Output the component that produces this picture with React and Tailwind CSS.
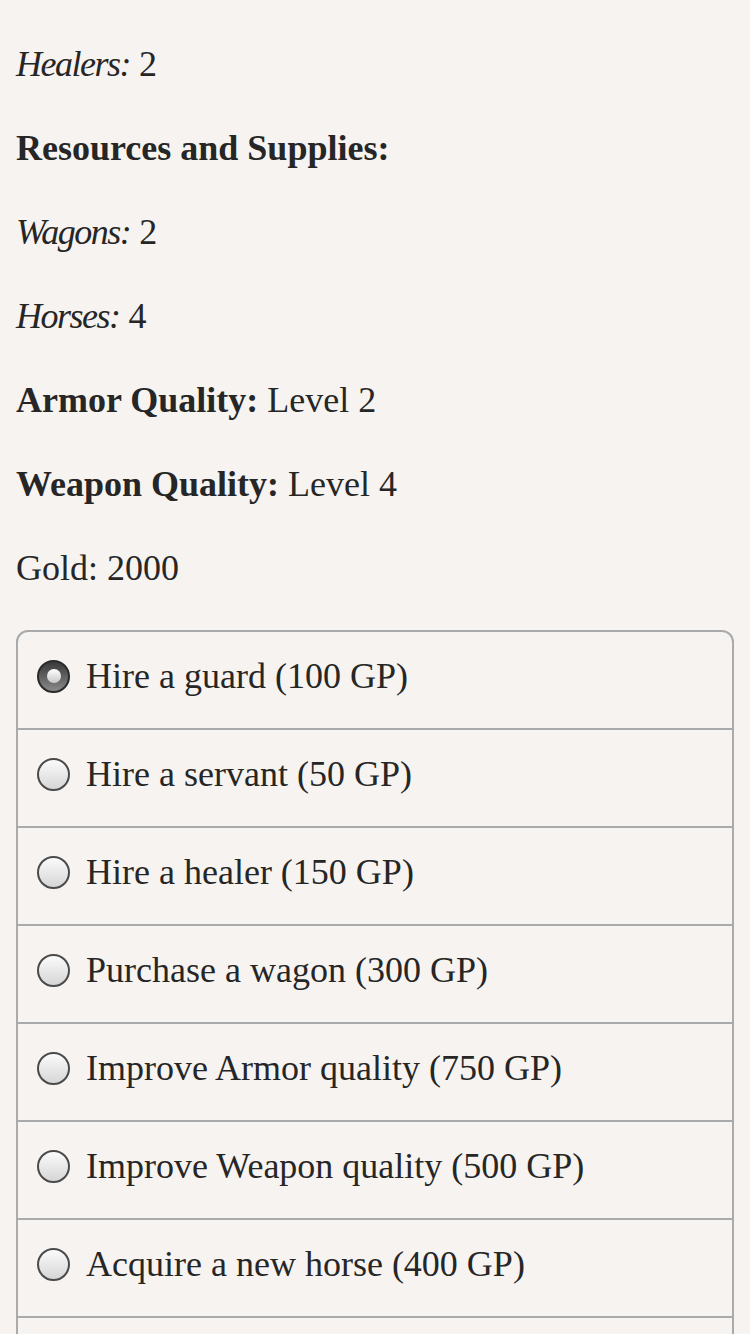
import React from "react";

const font = { fontFamily: '"Liberation Serif", "Times New Roman", serif' };

function Radio({ checked }) {
  if (checked) {
    return (
      <div className="w-[33px] h-[33px] shrink-0 rounded-full border-2 border-[#2a2a2a] bg-gradient-to-b from-[#3a3a3a] to-[#8a8a8a] flex items-center justify-center">
        <div className="w-[14px] h-[14px] rounded-full bg-gradient-to-b from-[#ffffff] to-[#c8c8c8]" />
      </div>
    );
  }
  return (
    <div className="w-[33px] h-[33px] shrink-0 rounded-full border-2 border-[#4a4a4a] bg-gradient-to-b from-[#fbfbfb] to-[#d6d6d6]" />
  );
}

const options = [
  "Hire a guard (100 GP)",
  "Hire a servant (50 GP)",
  "Hire a healer (150 GP)",
  "Purchase a wagon (300 GP)",
  "Improve Armor quality (750 GP)",
  "Improve Weapon quality (500 GP)",
  "Acquire a new horse (400 GP)",
  "",
];

export default function App() {
  return (
    <div className="min-h-[1334px] bg-[#f6f3f0] text-[#262626] text-[36px]" style={font}>
      <div className="pt-[40px] px-[16px] flex flex-col gap-[36px]">
        <p className="leading-[48px]"><i className="tracking-[-1.5px]">Healers:</i> 2</p>
        <p className="leading-[48px]"><b>Resources and Supplies:</b></p>
        <p className="leading-[48px]"><i className="tracking-[-1.5px]">Wagons:</i> 2</p>
        <p className="leading-[48px]"><i className="tracking-[-1.5px]">Horses:</i> 4</p>
        <p className="leading-[48px]"><b>Armor Quality:</b> Level 2</p>
        <p className="leading-[48px]"><b>Weapon Quality:</b> Level 4</p>
        <p className="leading-[48px]">Gold: 2000</p>
      </div>
      <div className="mx-[16px] mt-[38px] border-2 border-[#a9aaab] rounded-[12px] flex flex-col">
        {options.map((o, i) => (
          <div
            key={i}
            className={`h-[96px] flex items-center gap-[16px] pl-[19px] pb-[8px] ${i > 0 ? "border-t-2 border-[#a9aaab] h-[98px]" : ""}`}
          >
            {o ? <Radio checked={i === 0} /> : null}
            {o ? <span className="leading-[48px]">{o}</span> : null}
          </div>
        ))}
      </div>
    </div>
  );
}
